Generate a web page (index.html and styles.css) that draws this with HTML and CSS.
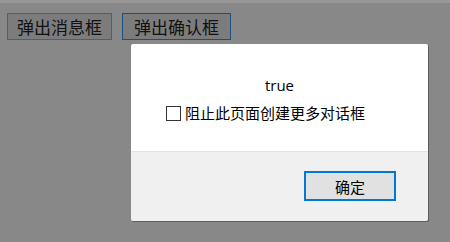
FILE: index.html
```html
<!DOCTYPE html>
<html lang="zh-CN">

<head>
    <meta charset="UTF-8">
    <title>对话框</title>
    <link rel="stylesheet" href="styles.css">
</head>

<body>

    <div class="top-strip"></div>

    <!-- Toolbar -->
    <div class="toolbar">
        <button class="page-btn">弹出消息框</button>
        <button class="page-btn focused">弹出确认框</button>
    </div>

    <!-- Dialog -->
    <div class="dialog">
        <div class="dialog-body">
            <p class="message">true</p>
            <label class="suppress">
                <span class="check-box"></span>
                阻止此页面创建更多对话框
            </label>
        </div>
        <div class="dialog-footer">
            <button class="ok-btn">确定</button>
        </div>
    </div>

</body>

</html>
```

FILE: styles.css
```css
/* General */
body {
    margin: 0;
    padding: 0;
    background-color: #888888;
    font-family: "Noto Sans CJK SC", "Microsoft YaHei", sans-serif;
    height: 242px;
    overflow: hidden;
}

.top-strip {
    height: 3px;
    background-color: #979797;
}

/* Toolbar buttons (behind the overlay) */
.toolbar {
    display: flex;
    gap: 10px;
    padding: 10px 7px 0;
}

.page-btn {
    height: 27px;
    padding: 0 9px;
    font-family: "Noto Sans CJK SC", sans-serif;
    font-size: 17px;
    line-height: 25px;
    color: #111;
    background-color: #7c7c7c;
    border: 1px solid #5c5c5c;
}

.page-btn.focused {
    padding: 0 11px;
    border-color: #1f4f7e;
}

/* Dialog */
.dialog {
    position: absolute;
    left: 131px;
    top: 44px;
    width: 297px;
    height: 177px;
    border-radius: 2px;
    overflow: hidden;
    box-shadow: 1px 1px 0 #5e5e5e;
    display: flex;
    flex-direction: column;
}

.dialog-body {
    height: 107px;
    background-color: #ffffff;
    border-bottom: 1px solid #e3e3e3;
    display: flex;
    flex-direction: column;
}

.message {
    margin: 30px 0 0;
    text-align: center;
    font-family: "Open Sans", "Noto Sans", sans-serif;
    font-size: 15px;
    line-height: 22px;
    color: #000;
}

.suppress {
    display: flex;
    align-items: center;
    gap: 4px;
    margin: 7px 0 0 35px;
    font-size: 15px;
    line-height: 20px;
    color: #000;
}

.check-box {
    width: 13px;
    height: 13px;
    border: 1px solid #333;
    background-color: #fff;
}

.dialog-footer {
    flex: 1;
    background-color: #f0f0f0;
    display: flex;
    justify-content: flex-end;
    align-items: flex-start;
    padding: 19px 32px 0 0;
}

.ok-btn {
    width: 92px;
    height: 30px;
    background-color: #e1e1e1;
    border: 2px solid #0078d7;
    font-family: "Noto Sans CJK SC", sans-serif;
    font-size: 15px;
    color: #000;
    padding: 0;
}
```
